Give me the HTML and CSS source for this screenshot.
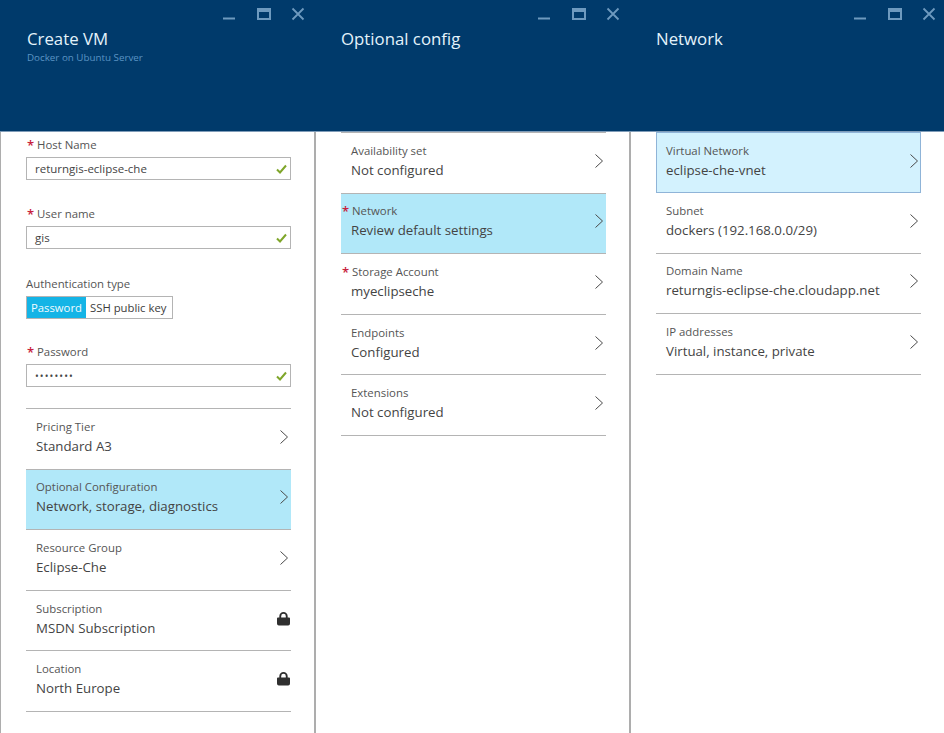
FILE: index.html
```html
<!DOCTYPE html>
<html lang="en">
<head>
    <meta charset="UTF-8">
    <title>Create VM</title>
    <link rel="stylesheet" href="styles.css">
</head>
<body>
    <svg class="icon-defs" width="0" height="0">
        <symbol id="chevron" viewBox="0 0 8 14"><path d="M0.500 0.500 L7.500 7 L0.500 13.500" fill="none" stroke="currentColor" stroke-width="1"/></symbol>
        <symbol id="check" viewBox="0 0 11 10"><path d="M1 5.500 L4 8.500 L10 1.500" fill="none" stroke="currentColor" stroke-width="2"/></symbol>
        <symbol id="lock" viewBox="0 0 14 15"><path d="M1 6.500 H2.500 V5 A4.500 4.500 0 0 1 11.500 5 V6.500 H13 Q14 6.500 14 7.500 V13 Q14 15 12 15 H2 Q0 15 0 13 V7.500 Q0 6.500 1 6.500 Z M4.500 6.500 H9.500 V5 A2.500 2.500 0 0 0 4.500 5 Z" fill="currentColor" fill-rule="evenodd"/></symbol>
        <symbol id="win-min" viewBox="0 0 14 14"><path d="M1 11.500 H13" fill="none" stroke="currentColor" stroke-width="2"/></symbol>
        <symbol id="win-max" viewBox="0 0 14 12"><path d="M1 1 H13 V11 H1 Z M1 3 H13" fill="none" stroke="currentColor" stroke-width="2"/></symbol>
        <symbol id="win-close" viewBox="0 0 14 14"><path d="M1.500 1.500 L12.500 12.500 M12.500 1.500 L1.500 12.500" fill="none" stroke="currentColor" stroke-width="1.800"/></symbol>
    </svg>

    <div class="blades">
        <!-- Create VM -->
        <section class="blade">
            <header class="blade-head">
                <div class="win-btns">
                    <svg class="win-btn"><use href="#win-min"/></svg>
                    <svg class="win-btn"><use href="#win-max"/></svg>
                    <svg class="win-btn"><use href="#win-close"/></svg>
                </div>
                <h1>Create VM</h1>
                <p class="subtitle">Docker on Ubuntu Server</p>
            </header>
            <div class="blade-body form-body">
                <div class="field">
                    <label class="req">Host Name</label>
                    <div class="input">returngis-eclipse-che<svg class="check"><use href="#check"/></svg></div>
                </div>
                <div class="field">
                    <label class="req">User name</label>
                    <div class="input">gis<svg class="check"><use href="#check"/></svg></div>
                </div>
                <div class="field field-auth">
                    <label>Authentication type</label>
                    <div class="toggle"><span class="on">Password</span><span>SSH public key</span></div>
                </div>
                <div class="field field-last">
                    <label class="req">Password</label>
                    <div class="input dots">••••••••<svg class="check"><use href="#check"/></svg></div>
                </div>
                <ul class="rows first-line">
                    <li class="row"><div><small>Pricing Tier</small><span>Standard A3</span></div><svg class="chevron"><use href="#chevron"/></svg></li>
                    <li class="row active"><div><small>Optional Configuration</small><span>Network, storage, diagnostics</span></div><svg class="chevron"><use href="#chevron"/></svg></li>
                    <li class="row"><div><small>Resource Group</small><span>Eclipse-Che</span></div><svg class="chevron"><use href="#chevron"/></svg></li>
                    <li class="row"><div><small>Subscription</small><span>MSDN Subscription</span></div><svg class="lock"><use href="#lock"/></svg></li>
                    <li class="row"><div><small>Location</small><span>North Europe</span></div><svg class="lock"><use href="#lock"/></svg></li>
                </ul>
            </div>
        </section>

        <!-- Optional config -->
        <section class="blade">
            <header class="blade-head">
                <div class="win-btns">
                    <svg class="win-btn"><use href="#win-min"/></svg>
                    <svg class="win-btn"><use href="#win-max"/></svg>
                    <svg class="win-btn"><use href="#win-close"/></svg>
                </div>
                <h1>Optional config</h1>
            </header>
            <div class="blade-body">
                <ul class="rows first-line">
                    <li class="row"><div><small>Availability set</small><span>Not configured</span></div><svg class="chevron"><use href="#chevron"/></svg></li>
                    <li class="row active"><div><small class="req">Network</small><span>Review default settings</span></div><svg class="chevron"><use href="#chevron"/></svg></li>
                    <li class="row"><div><small class="req">Storage Account</small><span>myeclipseche</span></div><svg class="chevron"><use href="#chevron"/></svg></li>
                    <li class="row"><div><small>Endpoints</small><span>Configured</span></div><svg class="chevron"><use href="#chevron"/></svg></li>
                    <li class="row"><div><small>Extensions</small><span>Not configured</span></div><svg class="chevron"><use href="#chevron"/></svg></li>
                </ul>
            </div>
        </section>

        <!-- Network -->
        <section class="blade">
            <header class="blade-head">
                <div class="win-btns">
                    <svg class="win-btn"><use href="#win-min"/></svg>
                    <svg class="win-btn"><use href="#win-max"/></svg>
                    <svg class="win-btn"><use href="#win-close"/></svg>
                </div>
                <h1>Network</h1>
            </header>
            <div class="blade-body">
                <ul class="rows">
                    <li class="row selected"><div><small>Virtual Network</small><span>eclipse-che-vnet</span></div><svg class="chevron"><use href="#chevron"/></svg></li>
                    <li class="row"><div><small>Subnet</small><span>dockers (192.168.0.0/29)</span></div><svg class="chevron"><use href="#chevron"/></svg></li>
                    <li class="row"><div><small>Domain Name</small><span>returngis-eclipse-che.cloudapp.net</span></div><svg class="chevron"><use href="#chevron"/></svg></li>
                    <li class="row"><div><small>IP addresses</small><span>Virtual, instance, private</span></div><svg class="chevron"><use href="#chevron"/></svg></li>
                </ul>
            </div>
        </section>
    </div>
</body>
</html>
```

FILE: styles.css
```css
* {
    box-sizing: border-box;
}

body {
    margin: 0;
    overflow: hidden;
    font-family: "Open Sans", "Noto Sans", sans-serif;
    color: #3c3c3c;
    background-color: #fff;
}

.icon-defs {
    position: absolute;
}

.blades {
    display: flex;
    width: 944px;
    height: 733px;
}

.blade {
    flex: 0 0 315px;
    display: flex;
    flex-direction: column;
    border-left: 1px solid #adadad;
    border-right: 1px solid #adadad;
}

.blade:last-child {
    flex-basis: 314px;
    border-right: none;
}

.blade-head {
    flex: none;
    height: 132px;
    margin: 0 -1px;
    padding: 27px 0 0 26px;
    background-color: #003a6b;
    border-bottom: 1px solid #7f9cb8;
    position: relative;
}

.blade:last-child .blade-head {
    margin-right: 0;
}

.blade-head h1 {
    margin: 0;
    font-size: 16.800px;
    font-weight: 400;
    line-height: 24px;
    color: #e4f3fb;
}

.blade:first-child .blade-head h1,
.subtitle {
    margin-left: 1px;
}

.subtitle {
    margin-top: 1px;
    margin-bottom: 0;
    font-size: 9.800px;
    line-height: 12px;
    color: #5b94c4;
}

.win-btns {
    position: absolute;
    top: 7px;
    right: 10px;
    display: flex;
    gap: 21px;
}

.blade:last-child .win-btns {
    right: 8px;
}

.win-btn {
    width: 14px;
    height: 14px;
    color: #6e9abf;
}

.win-btn:last-child {
    margin-left: -1px;
}

.blade-body {
    padding: 0 23px 0 25px;
}

.form-body {
    padding-top: 3px;
}

.field {
    height: 69px;
}

.field-auth {
    padding-top: 1px;
}

.field-last {
    height: 66px;
}

label {
    display: block;
    margin-bottom: 2px;
    font-size: 11.400px;
    line-height: 20px;
    color: #555;
}

small {
    display: block;
    font-size: 11.400px;
    color: #555;
}

.req {
    position: relative;
    padding-left: 11px;
}

.req::before {
    content: "*";
    position: absolute;
    left: 1px;
    top: 0;
    font-size: 13px;
    font-weight: 600;
    color: #c8203c;
}

.input {
    display: flex;
    align-items: center;
    justify-content: space-between;
    height: 23px;
    padding: 0 3px 0 8px;
    border: 1px solid #b4b4b4;
    font-size: 11.500px;
    color: #444;
}

.dots {
    font-size: 10px;
    letter-spacing: 1.100px;
}

.check {
    width: 11px;
    height: 10px;
    color: #7fa62a;
}

.toggle {
    display: flex;
    width: 147px;
    height: 23px;
    border: 1px solid #b4b4b4;
    font-size: 11.300px;
    line-height: 21px;
}

.toggle span {
    padding: 0 4px;
    white-space: nowrap;
}

.toggle .on {
    flex: 0 0 59px;
    background-color: #14b4e6;
    color: #f2fbff;
}

.rows {
    list-style: none;
    margin: 0;
    padding: 0;
}

.first-line {
    border-top: 1px solid #b4b4b4;
}

.row {
    display: flex;
    align-items: center;
    justify-content: space-between;
    height: 60.600px;
    padding: 0 3px 4px 10px;
    border-bottom: 1px solid #b4b4b4;
}

.row div {
    display: flex;
    flex-direction: column;
}

.row small {
    line-height: 18px;
}

.row span {
    font-size: 13.250px;
    line-height: 20px;
    color: #444;
}

.row small.req {
    margin-left: -10px;
}

.active {
    background-color: #b1e8f9;
}

.selected {
    height: 61px;
    background-color: #d3f2fe;
    border: 1px solid #8fb4d8;
    padding: 0 2px 4px 9px;
}

.chevron {
    width: 8px;
    height: 14px;
    color: #4a4a4a;
}

.lock {
    width: 13px;
    height: 15px;
    margin-right: -2px;
    margin-top: -1px;
    color: #2f2f2f;
}
```
